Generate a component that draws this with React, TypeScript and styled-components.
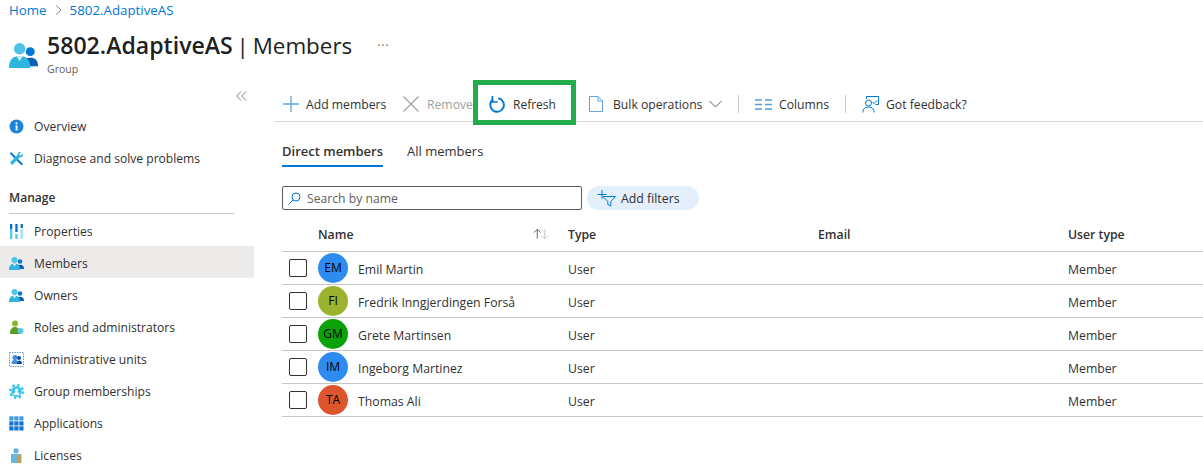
import React from "react";
import styled, { createGlobalStyle } from "styled-components";

const GlobalStyle = createGlobalStyle`
  html, body {
    margin: 0;
    padding: 0;
    background: #fff;
    overflow: hidden;
  }
  body {
    font-family: "Open Sans", "Noto Sans", "Liberation Sans", sans-serif;
    font-size: 12px;
    color: #323130;
  }
`;

const Page = styled.div`
  width: 1203px;
  height: 468px;
  overflow: hidden;
  position: relative;
`;

const Breadcrumb = styled.nav`
  display: flex;
  align-items: center;
  height: 20px;
  padding-left: 9px;
  gap: 8px;
  font-size: 13.3px;
  color: #0078d4;
`;

const Header = styled.header`
  display: flex;
  height: 66px;
  padding: 11px 0 0 9px;
  box-sizing: border-box;
`;

const HeaderIcon = styled.div`
  width: 29px;
  margin: 10px 9px 0 0;
`;

const TitleBlock = styled.div`
  display: flex;
  flex-direction: column;
`;

const Title = styled.h1`
  margin: 0;
  font-size: 22.4px;
  line-height: 28px;
  font-weight: 400;
  word-spacing: -2px;
  color: #201f1e;
  white-space: nowrap;
  b {
    font-size: 23.1px;
    font-weight: 600;
  }
`;

const SubTitle = styled.div`
  font-size: 10.5px;
  line-height: 15px;
  margin-top: 2px;
  color: #605e5c;
`;

const More = styled.div`
  margin: 6px 0 0 25px;
  font-size: 12px;
  letter-spacing: 1px;
  color: #605e5c;
`;

const Body = styled.div`
  display: flex;
`;

const Sidebar = styled.aside`
  width: 254px;
  flex: none;
`;

const Collapse = styled.div`
  display: flex;
  justify-content: flex-end;
  height: 23px;
  padding: 5px 7px 0 0;
  box-sizing: border-box;
  color: #8a8886;
`;

const NavItem = styled.div<{ $active?: boolean }>`
  display: flex;
  align-items: center;
  height: 32px;
  padding: 2px 0 0 9px;
  box-sizing: border-box;
  gap: 10px;
  font-size: 12.1px;
  white-space: nowrap;
  background: ${(p) => (p.$active ? "#edebe9" : "transparent")};
`;

const NavIcon = styled.svg<{ $size?: number }>`
  width: ${(p) => p.$size ?? 15}px;
  height: ${(p) => p.$size ?? 15}px;
  flex: none;
`;

const SectionTitle = styled.div`
  margin: 7px 20px 0 9px;
  height: 34px;
  line-height: 36px;
  box-sizing: border-box;
  border-bottom: 1px solid #c8c6c4;
  font-size: 12.1px;
  font-weight: 600;
`;

const Main = styled.main`
  flex: 1;
  margin-left: 20px;
`;

const Toolbar = styled.div`
  display: flex;
  align-items: center;
  height: 34px;
  padding: 2px 0 0 9px;
  margin-top: -1px;
  border-bottom: 1px solid #d6d6d6;
`;

const ToolButton = styled.div<{ $disabled?: boolean; $width: number; $gap?: number }>`
  display: flex;
  align-items: center;
  width: ${(p) => p.$width}px;
  flex: none;
  gap: ${(p) => p.$gap ?? 7}px;
  font-size: 12.2px;
  white-space: nowrap;
  overflow: hidden;
  color: ${(p) => (p.$disabled ? "#a19f9d" : "#323130")};
  svg {
    flex: none;
  }
`;

const RefreshLabel = styled.span`
  font-size: 12px;
`;

const Chevron = styled.svg`
  margin-left: -3px;
`;

const ToolDivider = styled.div`
  width: 1px;
  height: 18px;
  background: #c8c6c4;
  flex: none;
  margin-right: 16px;
`;

const Highlight = styled.div`
  position: absolute;
  left: 473px;
  top: 80px;
  width: 103px;
  height: 45px;
  box-sizing: border-box;
  border: 5px solid #21ad4c;
`;

const Tabs = styled.div`
  display: flex;
  gap: 24px;
  margin: 18px 0 0 8px;
`;

const Tab = styled.div<{ $active?: boolean }>`
  height: 27px;
  line-height: 23px;
  box-sizing: border-box;
  font-size: 13px;
  font-weight: ${(p) => (p.$active ? 600 : 400)};
  border-bottom: 2px solid ${(p) => (p.$active ? "#0078d4" : "transparent")};
`;

const FilterRow = styled.div`
  display: flex;
  align-items: center;
  gap: 5px;
  margin: 19px 0 0 8px;
`;

const SearchBox = styled.div`
  display: flex;
  align-items: center;
  gap: 6px;
  width: 300px;
  height: 24px;
  box-sizing: border-box;
  border: 1px solid #605e5c;
  border-radius: 2px;
  padding-left: 5px;
  font-size: 12.2px;
  color: #605e5c;
`;

const FilterPill = styled.div`
  display: flex;
  align-items: center;
  gap: 5px;
  width: 112px;
  height: 24px;
  box-sizing: border-box;
  padding-left: 10px;
  border-radius: 12px;
  background: #e3f0fb;
  font-size: 12.3px;
`;

const Table = styled.div`
  margin: 7px 0 0 8px;
`;

const Row = styled.div<{ $head?: boolean }>`
  display: grid;
  grid-template-columns: 36px 250px 250px 250px 1fr;
  align-items: center;
  height: ${(p) => (p.$head ? 35 : 33)}px;
  box-sizing: border-box;
  border-bottom: 1px solid #c8c6c4;
  font-size: 12.25px;
  font-weight: ${(p) => (p.$head ? 600 : 400)};
  white-space: nowrap;
`;

const CellText = styled.span`
  padding-top: 2px;
`;

const NameHead = styled.div`
  display: flex;
  justify-content: space-between;
  align-items: center;
  padding-right: 19px;
`;

const CheckBox = styled.div`
  width: 18px;
  height: 18px;
  margin-left: 7px;
  box-sizing: border-box;
  border: 1px solid #323130;
  border-radius: 2px;
`;

const NameCell = styled.div`
  display: flex;
  align-items: center;
  gap: 10px;
`;

const Avatar = styled.div<{ $color: string }>`
  width: 30px;
  height: 30px;
  flex: none;
  border-radius: 50%;
  background: ${(p) => p.$color};
  color: #000;
  font-size: 12px;
  line-height: 30px;
  text-align: center;
`;

const PeopleIcon = ({ size = 15 }: { size?: number }) => (
  <NavIcon $size={size} viewBox="0 0 30 28">
    <circle cx="22" cy="10" r="4.6" fill="#0078d4" />
    <path d="M14 25c0-6 3-8.600 8-8.600s8 2.600 8 8.600z" fill="#0a5fb4" />
    <circle cx="11" cy="7" r="6" fill="#4fc3e8" />
    <path d="M0 27c0-9 4-12.500 11-12.500S22 18 22 27z" fill="#2fb4df" />
    <path d="M8 14.800h6l-3 5z" fill="#e8f8fd" />
  </NavIcon>
);

const icons: Record<string, React.ReactNode> = {
  overview: (
    <NavIcon viewBox="0 0 15 15">
      <circle cx="7.500" cy="7.500" r="7" fill="#1b85d8" />
      <rect x="6.600" y="6.400" width="1.900" height="5" fill="#fff" />
      <circle cx="7.500" cy="4.300" r="1.100" fill="#fff" />
    </NavIcon>
  ),
  diagnose: (
    <NavIcon viewBox="0 0 15 15">
      <path d="M2 1l12 12-1.500 1.500L.8 2.500z" fill="#0078d4" />
      <path d="M13.800 2.800l-2.300 2-1.500-1.300 2-2.300C10 .5 8.400 2 8.600 4L1 11.600 3.200 14l7.700-7.700c2.200.3 3.800-1.300 2.900-3.500z" fill="#2fb4df" />
    </NavIcon>
  ),
  properties: (
    <NavIcon viewBox="0 0 15 15">
      <rect x="1" y="0" width="2.300" height="5" fill="#0a6cc4" />
      <rect x="1" y="5" width="2.300" height="10" fill="#50c8ef" />
      <rect x="6.300" y="0" width="2.300" height="8" fill="#0a6cc4" />
      <rect x="6.300" y="10" width="2.300" height="5" fill="#50c8ef" />
      <rect x="11.600" y="0" width="2.300" height="4" fill="#0a6cc4" />
      <rect x="11.600" y="5" width="2.300" height="10" fill="#9be3f7" />
    </NavIcon>
  ),
  roles: (
    <NavIcon viewBox="0 0 15 15">
      <circle cx="6" cy="3.600" r="3" fill="#86b82a" />
      <path d="M1 14c0-5 2-7 5-7s5 2 5 7z" fill="#5e9c1c" />
      <circle cx="11.500" cy="11" r="3" fill="#59c6ea" />
    </NavIcon>
  ),
  units: (
    <NavIcon viewBox="0 0 15 15">
      <rect x=".5" y=".5" width="14" height="14" fill="#fff" stroke="#5b9bd5" strokeDasharray="1.500 1" />
      <circle cx="6" cy="5.500" r="2.500" fill="#3f8fdc" />
      <path d="M2.500 12c0-3 1.500-4.200 3.500-4.200s3.500 1.200 3.500 4.200z" fill="#3f8fdc" />
      <circle cx="10" cy="6" r="2" fill="#0a4f9e" />
      <path d="M8 12c0-2.500 1-3.600 2.500-3.600S13 9.500 13 12z" fill="#0a4f9e" />
    </NavIcon>
  ),
  memberships: (
    <NavIcon viewBox="0 0 15 15">
      <circle cx="7.500" cy="7.500" r="5.200" fill="#34c3ec" />
      <circle cx="7.500" cy="7.500" r="6.400" fill="none" stroke="#34c3ec" strokeWidth="2.200" strokeDasharray="2.500 2.500" />
      <circle cx="7.500" cy="6.300" r="1.700" fill="#fff" />
      <path d="M4.500 11c0-2 1.300-3 3-3s3 1 3 3z" fill="#fff" />
    </NavIcon>
  ),
  applications: (
    <NavIcon viewBox="0 0 15 15">
      {[0, 5, 10].flatMap((y) =>
        [0, 5, 10].map((x) => (
          <rect key={`${x}-${y}`} x={x + 0.3} y={y + 0.3} width="4.200" height="4.200" fill={y === 0 ? "#3f9be6" : "#0f75d1"} />
        ))
      )}
    </NavIcon>
  ),
  licenses: (
    <NavIcon viewBox="0 0 15 15">
      <circle cx="7" cy="2.800" r="2.600" fill="#5fb3dd" />
      <rect x="2" y="6" width="10.500" height="9" fill="#65b9dc" />
      <rect x="8" y="7" width="3.500" height="8" fill="#e39a2d" />
    </NavIcon>
  ),
};

const navTop = [
  { icon: icons.overview, label: "Overview" },
  { icon: icons.diagnose, label: "Diagnose and solve problems" },
];

const navManage = [
  { icon: icons.properties, label: "Properties" },
  { icon: <PeopleIcon />, label: "Members", active: true },
  { icon: <PeopleIcon />, label: "Owners" },
  { icon: icons.roles, label: "Roles and administrators" },
  { icon: icons.units, label: "Administrative units" },
  { icon: icons.memberships, label: "Group memberships" },
  { icon: icons.applications, label: "Applications" },
  { icon: icons.licenses, label: "Licenses" },
];

const members = [
  { initials: "EM", name: "Emil Martin", color: "#2e8bf0" },
  { initials: "FI", name: "Fredrik Inngjerdingen Forså", color: "#9cb32f" },
  { initials: "GM", name: "Grete Martinsen", color: "#0aa20a" },
  { initials: "IM", name: "Ingeborg Martinez", color: "#2e8bf0" },
  { initials: "TA", name: "Thomas Ali", color: "#dc552c" },
];

export default function App() {
  return (
    <Page>
      <GlobalStyle />
      <Breadcrumb>
        <span>Home</span>
        <svg width="7" height="10" viewBox="0 0 7 10">
          <path d="M1 .5l5 4.500-5 4.500" fill="none" stroke="#8a8886" />
        </svg>
        <span>5802.AdaptiveAS</span>
      </Breadcrumb>
      <Header>
        <HeaderIcon>
          <PeopleIcon size={29} />
        </HeaderIcon>
        <TitleBlock>
          <Title>
            <b>5802.AdaptiveAS</b> | Members
          </Title>
          <SubTitle>Group</SubTitle>
        </TitleBlock>
        <More>···</More>
      </Header>
      <Body>
        <Sidebar>
          <Collapse>
            <svg width="11" height="10" viewBox="0 0 11 10">
              <path d="M5 .5L.8 5 5 9.500M10 .5L5.800 5 10 9.500" fill="none" stroke="#8a8886" />
            </svg>
          </Collapse>
          {navTop.map((n) => (
            <NavItem key={n.label}>
              {n.icon}
              {n.label}
            </NavItem>
          ))}
          <SectionTitle>Manage</SectionTitle>
          {navManage.map((n) => (
            <NavItem key={n.label} $active={n.active}>
              {n.icon}
              {n.label}
            </NavItem>
          ))}
        </Sidebar>
        <Main>
          <Toolbar>
            <ToolButton $width={120}>
              <svg width="16" height="16" viewBox="0 0 16 16">
                <path d="M8 0v16M0 8h16" stroke="#5ba7e6" strokeWidth="1.300" />
              </svg>
              Add members
            </ToolButton>
            <ToolButton $width={86} $disabled $gap={8}>
              <svg width="16" height="16" viewBox="0 0 16 16">
                <path d="M.5.500l15 15M15.500.500l-15 15" stroke="#a19f9d" strokeWidth="1.100" />
              </svg>
              Remove
            </ToolButton>
            <ToolButton $width={100} $gap={8}>
              <svg width="16" height="17" viewBox="0 0 16 17">
                <path d="M4.200 3.400A6.800 6.800 0 1 0 9.300 2.300" fill="none" stroke="#0078d4" strokeWidth="1.900" />
                <path d="M3.400 0v6h5.400" fill="none" stroke="#0078d4" strokeWidth="1.700" />
              </svg>
              <RefreshLabel>Refresh</RefreshLabel>
            </ToolButton>
            <ToolButton $width={149} $gap={10}>
              <svg width="14" height="16" viewBox="0 0 14 16">
                <path d="M.5.500h8.500l4.500 4.500v10.500H.5z" fill="#fff" stroke="#5ba7e6" />
                <path d="M9 .5V5h4.500" fill="none" stroke="#5ba7e6" />
              </svg>
              <span>Bulk operations</span>
              <Chevron width="13" height="8" viewBox="0 0 13 8">
                <path d="M.5 1l6 6 6-6" fill="none" stroke="#605e5c" />
              </Chevron>
            </ToolButton>
            <ToolDivider />
            <ToolButton $width={90} $gap={7}>
              <svg width="17" height="11" viewBox="0 0 17 11">
                <path d="M0 1h7M0 5.500h7M0 10h7M10 1h7M10 5.500h7M10 10h7" stroke="#4f9fe3" strokeWidth="1.500" />
              </svg>
              Columns
            </ToolButton>
            <ToolDivider />
            <ToolButton $width={130}>
              <svg width="17" height="17" viewBox="0 0 17 17">
                <path d="M4.500 3V.500h12v8h-3" fill="none" stroke="#0078d4" />
                <circle cx="6.500" cy="7" r="3" fill="none" stroke="#0078d4" />
                <path d="M.8 16.500c0-3.500 2-5.500 5.700-5.500s5.700 2 5.700 5.500M10.500 6l1.500 1.500L15 4.500" fill="none" stroke="#0078d4" />
              </svg>
              Got feedback?
            </ToolButton>
          </Toolbar>
          <Tabs>
            <Tab $active>Direct members</Tab>
            <Tab>All members</Tab>
          </Tabs>
          <FilterRow>
            <SearchBox>
              <svg width="13" height="13" viewBox="0 0 13 13">
                <circle cx="8" cy="5" r="4" fill="none" stroke="#0078d4" />
                <path d="M5 8l-4.500 4.500" stroke="#0078d4" />
              </svg>
              Search by name
            </SearchBox>
            <FilterPill>
              <svg width="19" height="18" viewBox="0 0 19 18">
                <path d="M5 1v9M.500 5.500h9" stroke="#0078d4" />
                <path d="M6 7.500h12.500l-4.700 5v4.500l-3-1.500v-3z" fill="none" stroke="#0078d4" />
              </svg>
              Add filters
            </FilterPill>
          </FilterRow>
          <Table>
            <Row $head>
              <span />
              <NameHead>
                <span>Name</span>
                <svg width="16" height="12" viewBox="0 0 17 12">
                  <path d="M4.500 11V1M1 4.500l3.500-3.500L8 4.500" fill="none" stroke="#605e5c" />
                  <path d="M12.500 1v10M9 7.500l3.500 3.500L16 7.500" fill="none" stroke="#c8c6c4" />
                </svg>
              </NameHead>
              <span>Type</span>
              <span>Email</span>
              <span>User type</span>
            </Row>
            {members.map((m) => (
              <Row key={m.name}>
                <CheckBox />
                <NameCell>
                  <Avatar $color={m.color}>{m.initials}</Avatar>
                  <CellText>{m.name}</CellText>
                </NameCell>
                <CellText>User</CellText>
                <span />
                <CellText>Member</CellText>
              </Row>
            ))}
          </Table>
        </Main>
      </Body>
      <Highlight />
    </Page>
  );
}
